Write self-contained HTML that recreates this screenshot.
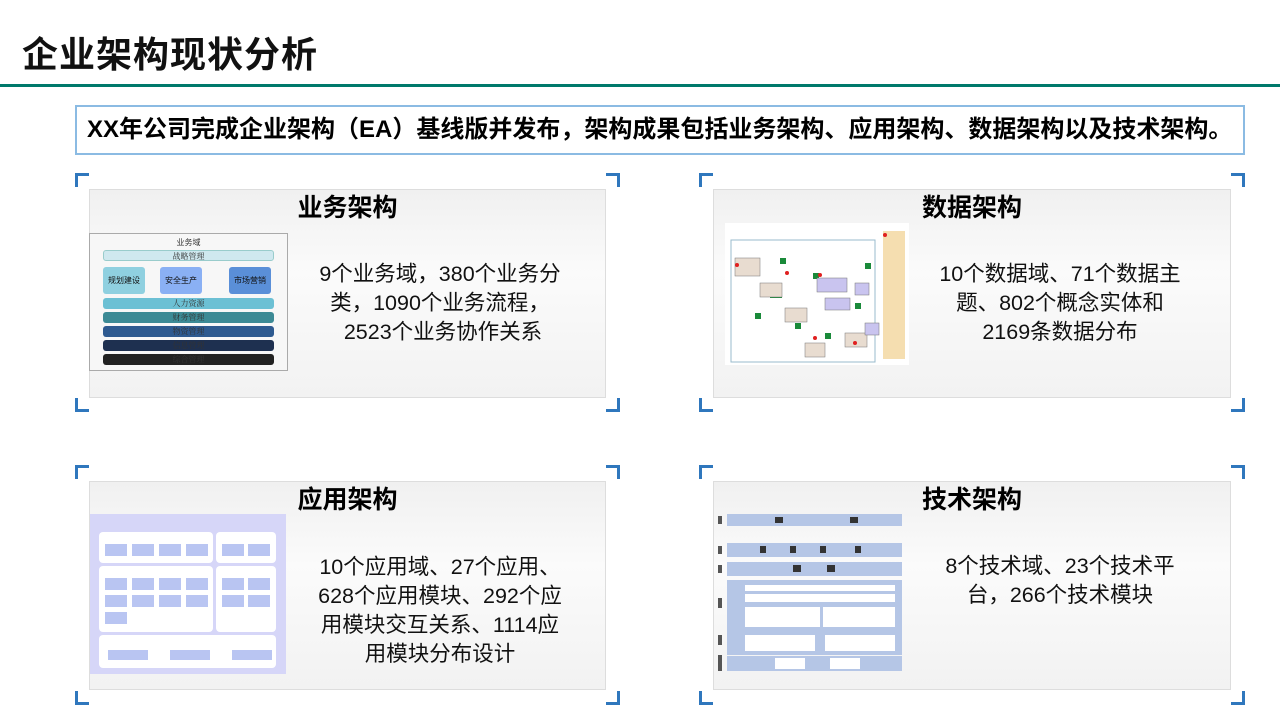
<!DOCTYPE html>
<html><head><meta charset="utf-8"><style>
*{margin:0;padding:0;box-sizing:border-box}
body{width:1280px;height:720px;background:#fff;position:relative;overflow:hidden;font-family:"Liberation Sans","Noto Sans CJK SC",sans-serif;color:#111}
.abs{position:absolute}
h1{position:absolute;left:22px;top:26px;font-size:36px;font-weight:bold;letter-spacing:1px}
.line{left:0;top:84px;width:1280px;height:3px;background:#00796b}
.banner{left:75px;top:105px;width:1170px;height:50px;border:2px solid #8bbbe3;font-size:24px;font-weight:bold;padding-left:10px;line-height:46px;white-space:nowrap;color:#000;overflow:hidden}
.br{position:absolute;width:14px;height:14px;border-color:#2f77bd;border-style:solid;border-width:0}
.inner{position:absolute;background:linear-gradient(#f0f0f0,#fbfbfb 40%,#f2f2f2);border:1px solid #ddd}
.title{position:absolute;font-size:25px;font-weight:bold;text-align:center;color:#000}
.txt{position:absolute;font-size:21.5px;line-height:29px;text-align:center;color:#111;white-space:nowrap}
.bar{position:absolute;left:13px;width:171px;height:11px;border-radius:3px;font-size:8px;text-align:center;line-height:11px;font-family:"Noto Serif CJK SC",serif;color:#333}
</style></head><body>
<h1>企业架构现状分析</h1>
<div class="abs line"></div>
<div class="abs banner">XX年公司完成企业架构（EA）基线版并发布，架构成果包括业务架构、应用架构、数据架构以及技术架构。</div>

<div class="br" style="left:75px;top:173px;border-left-width:3px;border-top-width:3px"></div>
<div class="br" style="left:606px;top:173px;border-right-width:3px;border-top-width:3px"></div>
<div class="br" style="left:75px;top:398px;border-left-width:3px;border-bottom-width:3px"></div>
<div class="br" style="left:606px;top:398px;border-right-width:3px;border-bottom-width:3px"></div>
<div class="inner" style="left:89px;top:189px;width:517px;height:209px"></div>
<div class="title" style="left:89px;top:188px;width:517px">业务架构</div>
<div class="abs" style="left:89px;top:233px;width:199px;height:138px;background:#f7f7f7;border:1px solid #aaa">
<div style="text-align:center;font-size:8px;margin-top:3px;color:#333">业务域</div>
<div class="bar" style="top:16px;background:#cfe8ef;border:1px solid #9cc">战略管理</div>
<div class="abs" style="left:13px;top:33px;width:42px;height:27px;background:#8fd0e0;border-radius:3px;font-size:8px;text-align:center;line-height:27px">规划建设</div>
<div class="abs" style="left:70px;top:33px;width:42px;height:27px;background:#8ab0f4;border-radius:3px;font-size:8px;text-align:center;line-height:27px">安全生产</div>
<div class="abs" style="left:139px;top:33px;width:42px;height:27px;background:#5a8fd8;border-radius:3px;font-size:8px;text-align:center;line-height:27px">市场营销</div>
<div class="bar" style="top:64px;background:#6cc0d4">人力资源</div>
<div class="bar" style="top:78px;background:#3c8a95">财务管理</div>
<div class="bar" style="top:92px;background:#2e5a90">物资管理</div>
<div class="bar" style="top:106px;background:#1e3050">信息管理</div>
<div class="bar" style="top:120px;background:#222">综合管理</div>
</div>
<div class="txt" style="left:300px;top:260px;width:280px">9个业务域，380个业务分<br>类，1090个业务流程，<br>&nbsp;2523个业务协作关系</div>

<div class="br" style="left:699px;top:173px;border-left-width:3px;border-top-width:3px"></div>
<div class="br" style="left:1231px;top:173px;border-right-width:3px;border-top-width:3px"></div>
<div class="br" style="left:699px;top:398px;border-left-width:3px;border-bottom-width:3px"></div>
<div class="br" style="left:1231px;top:398px;border-right-width:3px;border-bottom-width:3px"></div>
<div class="inner" style="left:713px;top:189px;width:518px;height:209px"></div>
<div class="title" style="left:713px;top:188px;width:518px">数据架构</div>
<div class="abs" style="left:725px;top:223px;width:184px;height:142px;background:#fff">
<svg width="184" height="142">
<rect x="6" y="17" width="144" height="122" fill="none" stroke="#9bc" />
<rect x="158" y="8" width="22" height="128" fill="#f5deb0"/>
<g fill="#1a8a3a"><rect x="55" y="35" width="6" height="6"/><rect x="88" y="50" width="6" height="6"/><rect x="30" y="90" width="6" height="6"/><rect x="100" y="110" width="6" height="6"/><rect x="130" y="80" width="6" height="6"/><rect x="70" y="100" width="6" height="6"/><rect x="110" y="60" width="6" height="6"/><rect x="45" y="70" width="12" height="5"/><rect x="140" y="40" width="6" height="6"/></g>
<g fill="#e8dcd0" stroke="#777" stroke-width=".5"><rect x="10" y="35" width="25" height="18"/><rect x="35" y="60" width="22" height="14"/><rect x="60" y="85" width="22" height="14"/><rect x="80" y="120" width="20" height="14"/><rect x="120" y="110" width="22" height="14"/></g>
<g fill="#c9c4ef" stroke="#777" stroke-width=".5"><rect x="92" y="55" width="30" height="14"/><rect x="100" y="75" width="25" height="12"/><rect x="130" y="60" width="14" height="12"/><rect x="140" y="100" width="14" height="12"/></g>
<g fill="#e02020"><circle cx="12" cy="42" r="2"/><circle cx="62" cy="50" r="2"/><circle cx="95" cy="52" r="2"/><circle cx="130" cy="120" r="2"/><circle cx="90" cy="115" r="2"/><circle cx="160" cy="12" r="2"/></g>
</svg></div>
<div class="txt" style="left:925px;top:260px;width:270px">10个数据域、71个数据主<br>题、802个概念实体和<br>2169条数据分布</div>

<div class="br" style="left:75px;top:465px;border-left-width:3px;border-top-width:3px"></div>
<div class="br" style="left:606px;top:465px;border-right-width:3px;border-top-width:3px"></div>
<div class="br" style="left:75px;top:691px;border-left-width:3px;border-bottom-width:3px"></div>
<div class="br" style="left:606px;top:691px;border-right-width:3px;border-bottom-width:3px"></div>
<div class="inner" style="left:89px;top:481px;width:517px;height:209px"></div>
<div class="title" style="left:89px;top:480px;width:517px">应用架构</div>
<div class="abs" style="left:90px;top:514px;width:196px;height:160px;background:#d6d6f8">
<div class="abs" style="left:9px;top:18px;width:114px;height:31px;background:#fff;border-radius:4px"></div>
<div class="abs" style="left:126px;top:18px;width:60px;height:31px;background:#fff;border-radius:4px"></div>
<div class="abs" style="left:9px;top:52px;width:114px;height:66px;background:#fff;border-radius:4px"></div>
<div class="abs" style="left:126px;top:52px;width:60px;height:66px;background:#fff;border-radius:4px"></div>
<div class="abs" style="left:9px;top:121px;width:177px;height:33px;background:#fff;border-radius:4px"></div>
<svg class="abs" style="left:0;top:0" width="196" height="160"><g fill="#b9c5f2">
<rect x="15" y="30" width="22" height="12"/><rect x="42" y="30" width="22" height="12"/><rect x="69" y="30" width="22" height="12"/><rect x="96" y="30" width="22" height="12"/>
<rect x="132" y="30" width="22" height="12"/><rect x="158" y="30" width="22" height="12"/>
<rect x="15" y="64" width="22" height="12"/><rect x="42" y="64" width="22" height="12"/><rect x="69" y="64" width="22" height="12"/><rect x="96" y="64" width="22" height="12"/>
<rect x="15" y="81" width="22" height="12"/><rect x="42" y="81" width="22" height="12"/><rect x="69" y="81" width="22" height="12"/><rect x="96" y="81" width="22" height="12"/><rect x="15" y="98" width="22" height="12"/>
<rect x="132" y="64" width="22" height="12"/><rect x="158" y="64" width="22" height="12"/><rect x="132" y="81" width="22" height="12"/><rect x="158" y="81" width="22" height="12"/>
<rect x="18" y="136" width="40" height="10"/><rect x="80" y="136" width="40" height="10"/><rect x="142" y="136" width="40" height="10"/></g></svg>
</div>
<div class="txt" style="left:300px;top:553px;width:280px">10个应用域、27个应用、<br>628个应用模块、292个应<br>用模块交互关系、1114应<br>用模块分布设计</div>

<div class="br" style="left:699px;top:465px;border-left-width:3px;border-top-width:3px"></div>
<div class="br" style="left:1231px;top:465px;border-right-width:3px;border-top-width:3px"></div>
<div class="br" style="left:699px;top:691px;border-left-width:3px;border-bottom-width:3px"></div>
<div class="br" style="left:1231px;top:691px;border-right-width:3px;border-bottom-width:3px"></div>
<div class="inner" style="left:713px;top:481px;width:518px;height:209px"></div>
<div class="title" style="left:713px;top:480px;width:518px">技术架构</div>
<svg class="abs" style="left:715px;top:510px" width="190" height="165">
<g fill="#b5c6e6"><rect x="12" y="4" width="175" height="12"/><rect x="12" y="33" width="175" height="14"/><rect x="12" y="52" width="175" height="14"/><rect x="12" y="70" width="175" height="52"/><rect x="12" y="120" width="175" height="25"/><rect x="12" y="146" width="175" height="15"/></g>
<g fill="#fff"><rect x="30" y="75" width="150" height="6"/><rect x="30" y="84" width="150" height="8"/><rect x="30" y="97" width="75" height="20"/><rect x="108" y="97" width="72" height="20"/><rect x="30" y="125" width="70" height="16"/><rect x="110" y="125" width="70" height="16"/><rect x="60" y="148" width="30" height="11"/><rect x="115" y="148" width="30" height="11"/></g>
<g fill="#333"><rect x="60" y="7" width="8" height="6"/><rect x="135" y="7" width="8" height="6"/><rect x="45" y="36" width="6" height="7"/><rect x="75" y="36" width="6" height="7"/><rect x="105" y="36" width="6" height="7"/><rect x="140" y="36" width="6" height="7"/><rect x="78" y="55" width="8" height="7"/><rect x="112" y="55" width="8" height="7"/></g>
<g fill="#555"><rect x="3" y="6" width="4" height="8"/><rect x="3" y="36" width="4" height="8"/><rect x="3" y="55" width="4" height="8"/><rect x="3" y="88" width="4" height="10"/><rect x="3" y="125" width="4" height="10"/><rect x="3" y="145" width="4" height="16"/></g>
</svg>
<div class="txt" style="left:925px;top:552px;width:270px">8个技术域、23个技术平<br>台，266个技术模块</div>
</body></html>
